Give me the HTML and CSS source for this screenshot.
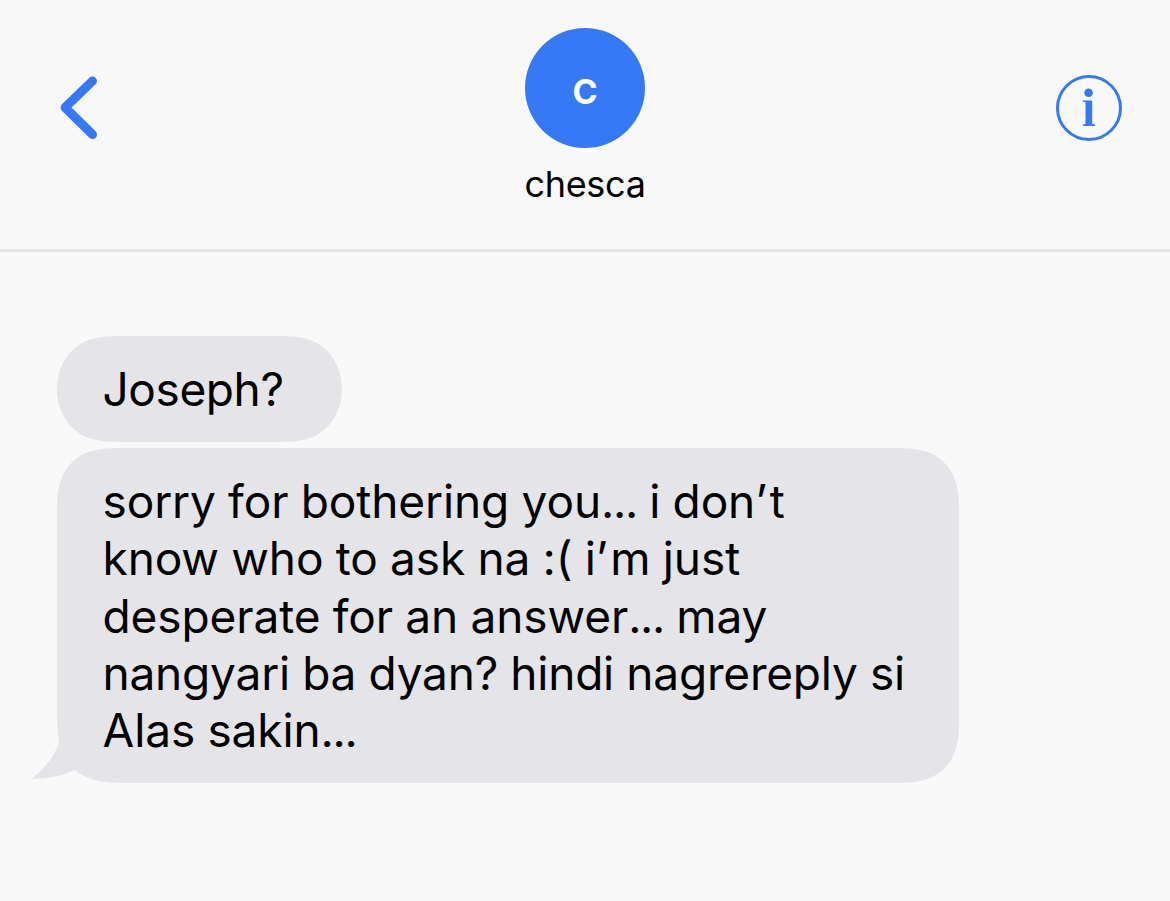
FILE: index.html
```
<!DOCTYPE html>
<html lang="en">
<head>
    <meta charset="UTF-8">
    <title>chesca</title>
    <link rel="stylesheet" href="styles.css">
</head>
<body>
    <header class="header">
        <button class="back" aria-label="Back">
            <svg width="40" height="64" viewBox="0 0 40 64">
                <path d="M34.5 5 L7 31.5 L34.5 58.5"/>
            </svg>
        </button>
        <div class="contact">
            <div class="avatar">C</div>
            <div class="name">chesca</div>
        </div>
        <button class="info" aria-label="Info">
            <svg width="66" height="66" viewBox="0 0 66 66">
                <circle class="ring" cx="33" cy="33" r="31.5"/>
                <circle cx="32.6" cy="17.7" r="4.3"/>
                <path d="M26.7 25.5 H36.2 V49 L39 49.5 V51 H27 V49.5 L29.5 49 V27.3 L26.7 26.8 Z"/>
            </svg>
        </button>
    </header>

    <main class="messages">
        <div class="bubble short">
            <svg class="shape" width="285" height="106" viewBox="0 0 285 106">
                <path d="M76 0 H209 C231 0 242 0 253 4 C271 10 285 29 285 53 C285 77 271 96 253 102 C242 106 231 106 209 106 H76 C54 106 43 106 32 102 C14 96 0 77 0 53 C0 29 14 10 32 4 C43 0 54 0 76 0 Z"/>
            </svg>
            <span class="line">Joseph?</span>
        </div>
        <div class="bubble long">
            <!-- bubble body with the tail at the bottom left -->
            <svg class="shape" width="902" height="335" viewBox="0 0 902 335">
                <path d="M76 0 H826 C848 0 859 0 870 4 C883 8 894 19 898 32 C902 43 902 54 902 76 V259 C902 281 902 292 898 303 C894 316 883 327 870 331 C859 335 848 335 826 335 H76 C46 335 34 334 18 322 C4 328 -10 331 -26 331 C-14 322 -2 309 2 294 C0 284 0 272 0 259 V76 C0 54 0 43 4 32 C8 19 19 8 32 4 C43 0 54 0 76 0 Z"/>
            </svg>
            <span class="line">sorry for bothering you<span class="dots">...</span> i don<span class="quote">’</span>t</span>
            <span class="line">know who to ask na :( i<span class="quote">’</span>m just</span>
            <span class="line">desperate for an answer<span class="dots">...</span> may</span>
            <span class="line tight">nangyari ba dyan? hindi nagrereply si</span>
            <span class="line">Alas sakin<span class="dots">...</span></span>
        </div>
    </main>
</body>
</html>
```
FILE: styles.css
```
body {
    margin: 0;
    background-color: #f9f9f9;
    color: black;
    font-family: Inter, "Liberation Sans", sans-serif;
}
button {
    padding: 0;
    border: none;
    background: none;
    cursor: pointer;
}
svg {
    display: block;
}
.header {
    display: flex;
    justify-content: space-between;
    box-sizing: border-box;
    height: 252px;
    padding: 28px 48px 0 58px;
    border-bottom: 3px solid #e4e4e8;
}
.back {
    width: 66px;
    height: 64px;
    margin-top: 48px;
}
.back path {
    fill: none;
    stroke: #3579f6;
    stroke-width: 9;
    stroke-linecap: round;
    stroke-linejoin: round;
}
.contact {
    display: flex;
    flex-direction: column;
    align-items: center;
    width: 200px;
    margin-right: 10px;
}
.avatar {
    width: 120px;
    height: 120px;
    border-radius: 50%;
    background-color: #3579f6;
    color: white;
    font-size: 34px;
    font-weight: bold;
    line-height: 128px;
    text-align: center;
}
.name {
    margin-top: 14px;
    font-size: 36px;
    letter-spacing: -0.3px;
    line-height: 45px;
}
.info {
    width: 66px;
    height: 66px;
    margin-top: 47px;
}
.info svg {
    fill: #3579f6;
}
.info .ring {
    fill: none;
    stroke: #3579f6;
    stroke-width: 3;
}
.messages {
    display: flex;
    flex-direction: column;
    align-items: flex-start;
    gap: 6px;
    padding: 84px 0 0 57px;
}
.bubble {
    position: relative;
    box-sizing: border-box;
    padding: 25px 46px;
    font-size: 46px;
    letter-spacing: -0.1px;
    word-spacing: -0.5px;
    line-height: 57.3px;
}
.short {
    width: 285px;
    height: 106px;
    letter-spacing: -0.4px;
}
.long {
    width: 902px;
    height: 335px;
}
.shape {
    position: absolute;
    top: 0;
    left: 0;
    z-index: -1;
    overflow: visible;
    fill: #e5e4e9;
}
.line {
    display: block;
    width: max-content;
    margin-left: -0.5px;
}
.tight {
    letter-spacing: -0.2px;
}
.dots {
    letter-spacing: -1.3px;
}
.quote {
    letter-spacing: 2.5px;
}
```
